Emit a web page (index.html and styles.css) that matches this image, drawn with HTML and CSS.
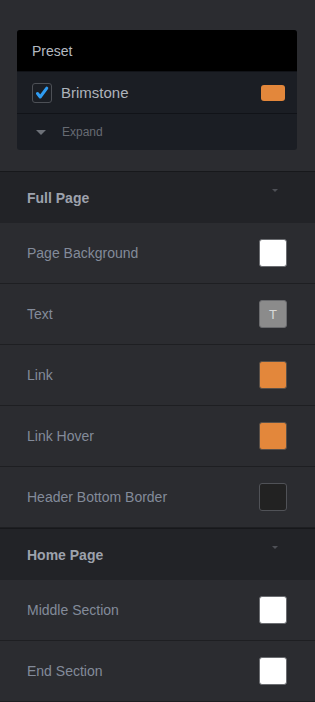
FILE: index.html
```html
<!DOCTYPE html>
<html>
<head>
<meta charset="utf-8">
<link rel="stylesheet" href="styles.css">
</head>
<body>
<div class="panel">
  <div class="preset-wrap">
    <div class="card">
      <div class="card-head">Preset</div>
      <div class="card-row">
        <span class="check"><svg width="14" height="14" viewBox="0 0 14 14"><path d="M2.5 7.5 L5.2 11 L11.8 2.2" fill="none" stroke="#2f9cf2" stroke-width="3" stroke-linecap="round" stroke-linejoin="round"/></svg></span>
        <span class="preset-name">Brimstone</span>
        <span class="preset-swatch"></span>
      </div>
      <div class="card-expand">
        <span class="tri"></span>
        <span class="expand-label">Expand</span>
      </div>
    </div>
  </div>

  <section class="group">
    <div class="group-head"><span>Full Page</span><span class="caret"></span></div>
    <div class="row"><span class="label">Page Background</span><span class="swatch white"></span></div>
    <div class="row"><span class="label">Text</span><span class="swatch text">T</span></div>
    <div class="row"><span class="label">Link</span><span class="swatch orange"></span></div>
    <div class="row"><span class="label">Link Hover</span><span class="swatch orange"></span></div>
    <div class="row"><span class="label">Header Bottom Border</span><span class="swatch dark"></span></div>
  </section>

  <section class="group">
    <div class="group-head"><span>Home Page</span><span class="caret"></span></div>
    <div class="row"><span class="label">Middle Section</span><span class="swatch white"></span></div>
    <div class="row"><span class="label">End Section</span><span class="swatch white"></span></div>
  </section>
</div>
</body>
</html>
```

FILE: styles.css
```css
html, body {
  margin: 0;
  padding: 0;
  background: #2b2c30;
  font-family: "Liberation Sans", Arial, sans-serif;
}
.panel {
  width: 315px;
  height: 702px;
  overflow: hidden;
}
.preset-wrap {
  padding: 30px 18px 21px 17px;
}
.card {
  background: #1b1e24;
  border-radius: 3px;
  overflow: hidden;
}
.card-head {
  background: #000;
  height: 41px;
  display: flex;
  align-items: center;
  padding-left: 15px;
  color: #b4b9c1;
  font-size: 14px;
}
.card-row {
  height: 41px;
  border-top: 1px solid #111318;
  display: flex;
  align-items: center;
  padding: 0 12px 0 15px;
}
.check {
  width: 18px;
  height: 18px;
  border: 1px solid #4d5056;
  border-radius: 3px;
  display: flex;
  align-items: center;
  justify-content: center;
  box-sizing: content-box;
}
.preset-name {
  margin-left: 9px;
  color: #aeb3bb;
  font-size: 15px;
  flex: 1;
}
.preset-swatch {
  width: 24px;
  height: 16px;
  background: #e3873b;
  border-radius: 3px;
}
.card-expand {
  height: 36px;
  border-top: 1px solid #111318;
  display: flex;
  align-items: center;
  padding-left: 19px;
}
.tri {
  width: 0;
  height: 0;
  border-left: 5px solid transparent;
  border-right: 5px solid transparent;
  border-top: 5px solid #6d7178;
}
.expand-label {
  margin-left: 16px;
  color: #676b73;
  font-size: 12px;
}
.group-head {
  height: 51px;
  border-top: 1px solid #17181b;
  background: #222327;
  display: flex;
  align-items: center;
  justify-content: space-between;
  padding: 0 37px 0 27px;
  color: #9da2ad;
  font-size: 14px;
  font-weight: bold;
}
.caret {
  width: 0;
  height: 0;
  border-left: 3px solid transparent;
  border-right: 3px solid transparent;
  border-top: 3px solid #4e5056;
  margin-top: -14px;
}
.row {
  height: 60px;
  display: flex;
  align-items: center;
  justify-content: space-between;
  padding: 0 28px 0 27px;
  border-bottom: 1px solid #1e1f22;
}
.label {
  color: #838b9a;
  font-size: 14px;
}
.swatch {
  width: 26px;
  height: 26px;
  border: 1px solid #55575c;
  border-radius: 3px;
  box-sizing: content-box;
  display: flex;
  align-items: center;
  justify-content: center;
}
.white { background: #fff; border-color: #6b6d71; }
.orange { background: #e3873b; border-color: #5a5048; }
.dark { background: #222222; border-color: #505257; }
.text {
  background: #8b8b8b;
  border-color: #6a6b6e;
  color: #d8d8d8;
  font-size: 13px;
}
```
